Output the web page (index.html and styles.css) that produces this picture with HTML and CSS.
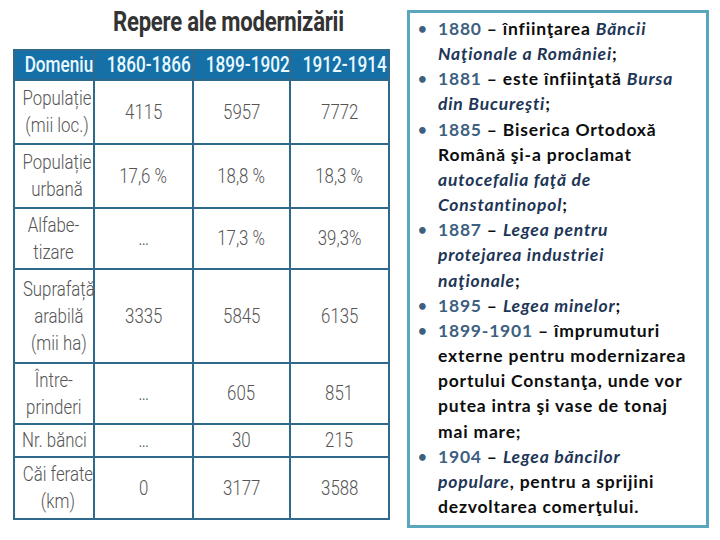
FILE: index.html
```html
<!DOCTYPE html>
<html lang="ro">
<head>
<meta charset="utf-8">
<title>Repere ale modernizării</title>
<link rel="stylesheet" href="styles.css">
</head>
<body>
<div class="page">
  <section class="left">
    <h1 class="title"><span class="sq">Repere ale modernizării</span></h1>
    <table class="data">
      <colgroup><col class="c1"><col class="c2"><col class="c3"><col class="c4"></colgroup>
      <thead>
        <tr class="head"><th><span class="sq">Domeniu</span></th><th><span class="sq">1860-1866</span></th><th><span class="sq">1899-1902</span></th><th><span class="sq">1912-1914</span></th></tr>
      </thead>
      <tbody>
        <tr class="r64"><td><span class="sq">Populație<br>(mii loc.)</span></td><td><span class="sq">4115</span></td><td><span class="sq">5957</span></td><td><span class="sq">7772</span></td></tr>
        <tr class="r64"><td><span class="sq">Populație<br>urbană</span></td><td><span class="sq">17,6 %</span></td><td><span class="sq">18,8 %</span></td><td><span class="sq">18,3 %</span></td></tr>
        <tr class="r61"><td><span class="sq">Alfabe-<br>tizare</span></td><td><span class="sq">…</span></td><td><span class="sq">17,3 %</span></td><td><span class="sq">39,3%</span></td></tr>
        <tr class="r94"><td><span class="sq">Suprafață<br>arabilă<br>(mii ha)</span></td><td><span class="sq">3335</span></td><td><span class="sq">5845</span></td><td><span class="sq">6135</span></td></tr>
        <tr class="r61"><td><span class="sq">Între-<br>prinderi</span></td><td><span class="sq">…</span></td><td><span class="sq">605</span></td><td><span class="sq">851</span></td></tr>
        <tr class="r33"><td><span class="sq">Nr. bănci</span></td><td><span class="sq">…</span></td><td><span class="sq">30</span></td><td><span class="sq">215</span></td></tr>
        <tr class="r62"><td><span class="sq">Căi ferate<br>(km)</span></td><td><span class="sq">0</span></td><td><span class="sq">3177</span></td><td><span class="sq">3588</span></td></tr>
      </tbody>
    </table>
  </section>
  <section class="box">
    <ul class="events">
      <li><span class="yr">1880</span> – înfiinţarea <em>Băncii<br>Naţionale a României</em>;</li>
      <li><span class="yr">1881</span> – este înfiinţată <em>Bursa<br>din Bucureşti</em>;</li>
      <li><span class="yr">1885</span> – Biserica Ortodoxă<br>Română şi-a proclamat<br><em>autocefalia faţă de<br>Constantinopol</em>;</li>
      <li><span class="yr">1887</span> – <em>Legea pentru<br>protejarea industriei<br>naţionale</em>;</li>
      <li><span class="yr">1895</span> – <em>Legea minelor</em>;</li>
      <li><span class="yr">1899-1901</span> – împrumuturi<br>externe pentru modernizarea<br>portului Constanţa, unde vor<br>putea intra şi vase de tonaj<br>mai mare;</li>
      <li><span class="yr">1904</span> – <em>Legea băncilor<br>populare</em>, pentru a sprijini<br>dezvoltarea comerţului.</li>
    </ul>
  </section>
</div>
</body>
</html>
```

FILE: styles.css
```css
html, body {
  margin: 0;
  padding: 0;
  background: #ffffff;
}
.page {
  display: flex;
  align-items: flex-start;
  width: 720px;
  height: 540px;
}
.left {
  margin-left: 13px;
  width: 375px;
  flex: none;
}
.sq {
  display: inline-block;
  white-space: nowrap;
  transform: scaleX(0.82);
  transform-origin: center center;
}
.title {
  margin: 0;
  height: 49px;
  padding-left: 100px;
  font-family: "Roboto", sans-serif;
  font-weight: 700;
  font-size: 27px;
  line-height: 44px;
  color: #333333;
  letter-spacing: -0.3px;
}
.title .sq {
  transform: scaleX(0.82);
  transform-origin: left center;
}
.data {
  border-collapse: collapse;
  width: 375px;
  table-layout: fixed;
  font-family: "Roboto", sans-serif;
  font-weight: 300;
  color: #555555;
  font-size: 20.5px;
}
.c1 { width: 80px; }
.c2 { width: 99px; }
.c3 { width: 97px; }
.c4 { width: 99px; }
.data th, .data td {
  border: 2px solid #2f6a8c;
  text-align: center;
  padding: 0;
  overflow: visible;
}
.head th {
  background: #1570a8;
  color: #e8f9ff;
  font-weight: 500;
  font-size: 22px;
  height: 28px;
  line-height: 26px;
}
.head th .sq {
  transform: scaleX(0.78);
}
.data td {
  line-height: 27px;
  vertical-align: middle;
}
.r64 td { height: 62px; }
.r61 td { height: 59px; }
.r62 td { height: 60px; }
.r94 td { height: 92px; }
.r33 td { height: 31px; }
.box {
  flex: none;
  margin-left: 19px;
  margin-top: 10px;
  width: 296px;
  height: 512px;
  border: 3px solid #5aa6bd;
}
.events {
  list-style: none;
  margin: 0;
  padding: 3px 0 0 28px;
  font-family: "Lato", "Open Sans", sans-serif;
  font-weight: 700;
  font-size: 17.5px;
  letter-spacing: 0.8px;
  line-height: 25.15px;
  color: #0d0d0d;
  white-space: nowrap;
}
.events li {
  position: relative;
}
.events li::before {
  content: "•";
  position: absolute;
  left: -20px;
  top: 0;
  font-size: 15px;
  color: #3e5f7f;
}
.yr {
  color: #3e5f7f;
}
.events em {
  color: #1e3656;
  font-style: italic;
}
```
